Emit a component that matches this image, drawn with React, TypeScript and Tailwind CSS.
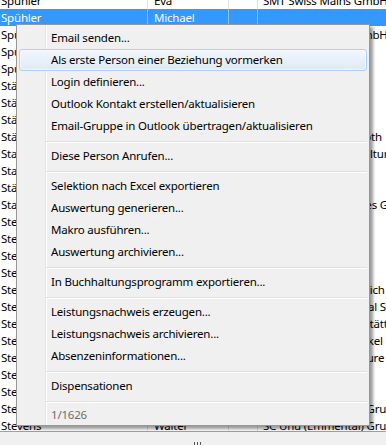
import React from 'react';

type Row = {
  name: string;
  first?: string;
  org?: string;
  selected?: boolean;
};

const rows: Row[] = [
  { name: 'Spühler', first: 'Eva', org: 'SMT Swiss Mains GmbH' },
  { name: 'Spühler', first: 'Michael', selected: true },
  { name: 'Spühler', first: 'Roland', org: 'SMT Swiss Mains GmbH' },
  { name: 'Spühler', first: 'Ursula' },
  { name: 'Spühler', first: 'Werner' },
  { name: 'Stäheli', first: 'Anna' },
  { name: 'Stäheli', first: 'Bruno' },
  { name: 'Stäger', first: 'Claudia' },
  { name: 'Stäubli', first: 'Daniel', org: 'Garage Gebrüder Roth' },
  { name: 'Stalder', first: 'Erika', org: 'Verein Musik und Kultur' },
  { name: 'Stalder', first: 'Franz' },
  { name: 'Stäuble', first: 'Gabi' },
  { name: 'Stalder', first: 'Hans', org: 'IB Informatik Services GmbH' },
  { name: 'Steffen', first: 'Irene' },
  { name: 'Steffen', first: 'Jakob' },
  { name: 'Steiger', first: 'Karin' },
  { name: 'Steiner', first: 'Lukas' },
  { name: 'Steiner', first: 'Monika', org: 'Stadtverwaltung Zürich' },
  { name: 'Steiner', first: 'Nina', org: 'Kanton Regionalspital Surselva' },
  { name: 'Stettler', first: 'Otto', org: 'IV Geschützte Werkstätte' },
  { name: 'Stettler', first: 'Paul', org: 'Bäckerei Martin Winkel' },
  { name: 'Steffen', first: 'Regula', org: 'Garage Natur & Nature' },
  { name: 'Steiner', first: 'Sandra' },
  { name: 'Stevens', first: 'Thomas' },
  { name: 'Stevens', first: 'Urs', org: 'SC Uhu (Emmental) Gruppe' },
  { name: 'Stevens', first: 'Walter', org: 'SC Uhu (Emmental) Gruppe' },
];

const menu: string[] = [
  'Email senden...',
  'Als erste Person einer Beziehung vormerken',
  'Login definieren...',
  'Outlook Kontakt erstellen/aktualisieren',
  'Email-Gruppe in Outlook übertragen/aktualisieren',
  '-',
  'Diese Person Anrufen...',
  '-',
  'Selektion nach Excel exportieren',
  'Auswertung generieren...',
  'Makro ausführen...',
  'Auswertung archivieren...',
  '-',
  'In Buchhaltungsprogramm exportieren...',
  '-',
  'Leistungsnachweis erzeugen...',
  'Leistungsnachweis archivieren...',
  'Absenzeninformationen...',
  '-',
  'Dispensationen',
  '-',
];

const GridRow = ({ row }: { row: Row }) => {
  const line = row.selected ? 'border-[#8cc4ff]' : 'border-[#e2e2e2]';
  return (
    <div
      className={`flex h-[17px] items-center leading-[17px] whitespace-nowrap ${
        row.selected ? 'bg-[#3399ff] text-white' : 'text-black'
      }`}
    >
      <div className={`w-[148px] h-full pl-[1px] border-r overflow-hidden ${line}`}>{row.name}</div>
      <div className={`w-[81px] h-full pl-[6px] border-r overflow-hidden ${line}`}>{row.first}</div>
      <div className={`w-[29px] h-full border-r ${line}`} />
      <div className="flex-1 h-full pl-[5px] overflow-hidden">{row.org}</div>
    </div>
  );
};

const ContextMenu = () => (
  <div className="absolute left-[16px] top-[24px] w-[354px] border border-[#979797] px-[2px] pt-[2px] bg-[linear-gradient(to_right,#f0f0f0_28px,#e2e3e3_28px,#e2e3e3_29px,#ffffff_29px,#ffffff_30px,#f0f0f0_30px)] shadow-[3px_3px_3px_rgba(0,0,0,0.4)] text-black">
    {menu.map((item, i) =>
      item === '-' ? (
        <div key={i} className="h-[8px] pt-[4px] pl-[27px]">
          <div className="h-[2px] border-t border-b border-t-[#e0e0e0] border-b-white" />
        </div>
      ) : i === 1 ? (
        <div
          key={i}
          className="h-[22px] leading-[20px] pl-[31px] rounded-[3px] border border-[#aecff7] bg-[linear-gradient(to_bottom,#f1f6fd,#dfeaf8)] shadow-[inset_0_0_0_1px_rgba(255,255,255,0.5)]"
        >
          {item}
        </div>
      ) : (
        <div key={i} className="h-[22px] leading-[22px] pl-[32px]">
          {item}
        </div>
      )
    )}
    <div className="h-[20px] leading-[20px] pl-[32px] text-[#6d6d6d]">1/1626</div>
  </div>
);

export default function App() {
  return (
    <div className="relative w-[386px] h-[445px] overflow-hidden bg-white font-['Noto_Sans',sans-serif] text-[11.5px] tracking-[-0.2px]">
      <div className="h-[431px] overflow-hidden">
        <div className="-mt-[8px]">
          {rows.map((r, i) => (
            <GridRow key={i} row={r} />
          ))}
        </div>
      </div>
      <div className="h-[14px] border-t border-[#a0a0a0] bg-[#f0f0f0] flex justify-center pt-[10px] pl-[8px]">
        <div className="flex gap-[2px]">
          <span className="w-[1px] h-[3px] bg-[#555]" />
          <span className="w-[1px] h-[3px] bg-[#555]" />
          <span className="w-[1px] h-[3px] bg-[#555]" />
        </div>
      </div>
      <ContextMenu />
    </div>
  );
}
